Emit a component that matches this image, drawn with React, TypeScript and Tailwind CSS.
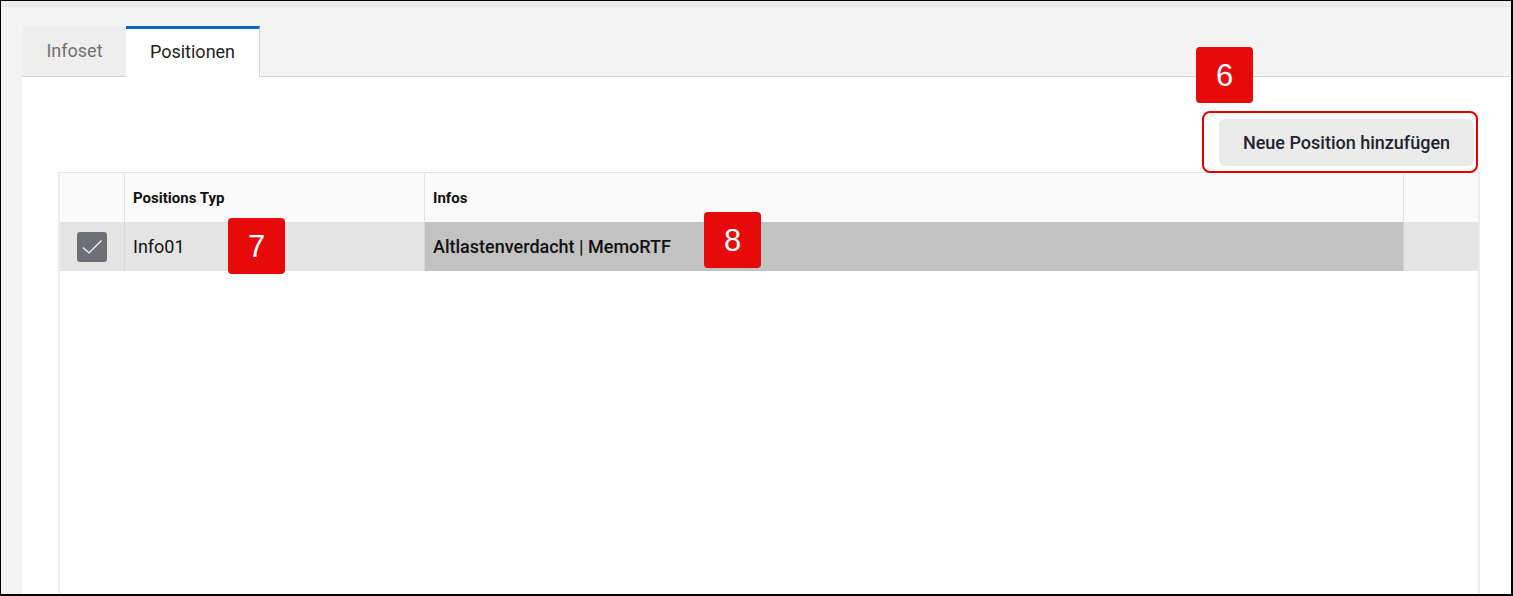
import React from "react";

function Badge({ n, className }: { n: string; className: string }) {
  return (
    <div
      className={
        "absolute flex h-[56px] w-[57px] items-center justify-center rounded-[4px] bg-[#e60a0a] text-[31px] leading-none text-white " +
        className
      }
      style={{ fontFamily: "'Liberation Sans', Arial, sans-serif" }}
    >
      {n}
    </div>
  );
}

export default function App() {
  return (
    <div
      className="flex h-[596px] w-[1513px] flex-col overflow-hidden border-t border-l border-r-2 border-b-2 border-black bg-[#f4f4f4]"
      style={{ fontFamily: "Roboto, 'Liberation Sans', sans-serif" }}
    >
      <div className="h-[6px] shrink-0 border-b border-[#e4e4e4] bg-[#ebebeb]" />
      <div className="flex flex-1 min-h-0">
        <div className="w-[21px] shrink-0 bg-[#f3f3f3]" />
        <div className="flex flex-1 flex-col min-w-0">
          <div className="flex h-[70px] shrink-0 items-end border-b border-[#d4d4d4] pl-px">
            <div className="flex h-[50px] w-[103px] items-center justify-center bg-[#eeeeee] pb-[2px] text-[18px] text-[#707070]">
              Infoset
            </div>
            <div className="flex h-[51px] w-[134px] translate-y-px items-center justify-center border-t-[3px] border-[#0a66cc] border-r border-r-[#d4d4d4] bg-white pb-[3px] text-[18px] text-[#222]">
              Positionen
            </div>
          </div>
          <div className="relative flex flex-1 flex-col bg-white min-h-0">
            <div className="flex justify-end pr-[37px] pt-[42px]">
              <div className="flex h-[47px] w-[255px] items-center justify-center rounded-[6px] bg-[#ebebeb] text-[18px] font-medium text-[#1f2430]">
                Neue Position hinzufügen
              </div>
            </div>
            <div className="ml-[36px] mr-[31px] mt-[6px] flex flex-1 flex-col border-x-2 border-t border-[#ececec] border-t-[#e6e6e6]">
              <div className="flex h-[49px] bg-[#fafafa] pt-[1px] text-[15px] font-bold text-[#111]">
                <div className="w-[65px] border-r border-[#e4e4e4]" />
                <div className="flex w-[300px] items-center border-r border-[#e4e4e4] pl-[8px]">Positions Typ</div>
                <div className="flex w-[979px] items-center border-r border-[#e4e4e4] pl-[8px]">Infos</div>
                <div className="flex-1" />
              </div>
              <div className="flex h-[49px] bg-[#e4e4e4] text-[18px] text-[#111]">
                <div className="flex w-[65px] items-center justify-center border-r border-[#d8d8d8]">
                  <div className="flex h-[30px] w-[30px] items-center justify-center rounded-[3px] bg-[#6d6f75]">
                    <svg width="30" height="30" viewBox="0 0 30 30" fill="none">
                      <path d="M6 15.5 L12 21 L24.5 8.5" stroke="white" strokeWidth="1.2" />
                    </svg>
                  </div>
                </div>
                <div className="flex w-[300px] items-center border-r border-[#d8d8d8] pl-[8px]">Info01</div>
                <div className="flex w-[979px] items-center border-r border-[#d0d0d0] bg-[#c2c2c2] pl-[8px] font-medium">
                  Altlastenverdacht | MemoRTF
                </div>
                <div className="flex-1" />
              </div>
              <div className="flex-1 bg-white" />
            </div>
            <div className="pointer-events-none absolute left-[1180px] top-[34px] h-[62px] w-[276px] rounded-[8px] border-2 border-[#e00000]" />
            <Badge n="6" className="left-[1174px] top-[-30px]" />
            <Badge n="7" className="left-[206px] top-[141px]" />
            <Badge n="8" className="left-[682px] top-[135px]" />
          </div>
        </div>
      </div>
    </div>
  );
}
